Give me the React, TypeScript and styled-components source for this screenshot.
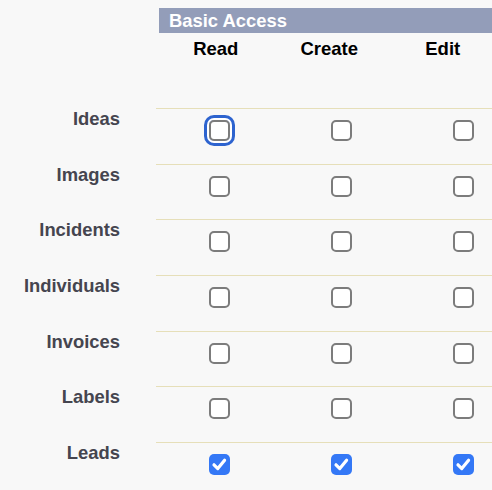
import React from 'react';
import styled, {createGlobalStyle} from 'styled-components';

const GlobalStyle = createGlobalStyle`
  html, body {
    margin: 0;
    padding: 0;
    background: #f8f8f8;
    overflow: hidden;
  }
  body {
    font-family: "Liberation Sans", Arial, Helvetica, sans-serif;
  }
`

const columns = ['Read', 'Create', 'Edit'];

const rows: { name: string; checked: boolean; focused?: boolean }[] = [
    {name: 'Ideas', checked: false, focused: true},
    {name: 'Images', checked: false},
    {name: 'Incidents', checked: false},
    {name: 'Individuals', checked: false},
    {name: 'Invoices', checked: false},
    {name: 'Labels', checked: false},
    {name: 'Leads', checked: true},
];

function CheckBox({checked, focused}: { checked: boolean; focused?: boolean }) {
    return (
        <BoxWrap $focused={focused}>
            <StyledCheck type="checkbox" defaultChecked={checked}/>
            {checked && (
                <CheckMark viewBox="0 0 21 21">
                    <path d="M5 10.8 L8.8 14.6 L15.6 6.2" fill="none" stroke="#fff" strokeWidth="3.2"
                          strokeLinecap="round" strokeLinejoin="round"/>
                </CheckMark>
            )}
        </BoxWrap>
    );
}

function App() {
    return (
        <Page>
            <GlobalStyle/>
            <Top>
                <SectionBar>Basic Access</SectionBar>
                <HeadRow>
                    {columns.map(c => <HeadCell key={c}>{c}</HeadCell>)}
                </HeadRow>
            </Top>
            <Table>
                {rows.map((r, i) => (
                    <Row key={r.name}>
                        <Label>{r.name}</Label>
                        <Cells>
                            {columns.map(c => (
                                <Cell key={c}>
                                    <CheckBox checked={r.checked} focused={r.focused && i === 0 && c === 'Read'}/>
                                </Cell>
                            ))}
                        </Cells>
                    </Row>
                ))}
            </Table>
        </Page>
    );
}

export default App;

const Page = styled.div`
  width: 492px;
  height: 490px;
  padding-top: 8px;
  box-sizing: border-box;
  overflow: hidden;
`

const Top = styled.div`
  padding-left: 159px;
`

const SectionBar = styled.div`
  height: 25px;
  line-height: 25px;
  background: #939db9;
  color: #fff;
  font-size: 18.4px;
  font-weight: 700;
  padding-left: 10px;
  white-space: nowrap;
`

const HeadRow = styled.div`
  display: grid;
  grid-template-columns: repeat(3, 113.5px);
  padding-top: 5px;
  height: 75px;
  box-sizing: border-box;
`

const HeadCell = styled.div`
  text-align: center;
  font-size: 18.5px;
  font-weight: 700;
  line-height: 22px;
  color: #000;
`

const Table = styled.div`
  display: flex;
  flex-direction: column;
`

const Row = styled.div`
  display: grid;
  grid-template-columns: 156px 1fr;
  height: 55.67px;
`

const Label = styled.div`
  text-align: right;
  padding: 1px 36px 0 0;
  font-size: 18.4px;
  font-weight: 700;
  line-height: 20px;
  color: #45454f;
  white-space: nowrap;
`

const Cells = styled.div`
  display: grid;
  grid-template-columns: repeat(3, 122px);
  padding-left: 2px;
  border-top: 1px solid #e6dfb9;
`

const Cell = styled.div`
  display: flex;
  justify-content: center;
  padding-top: 11px;
`

const BoxWrap = styled.span<{ $focused?: boolean }>`
  position: relative;
  display: inline-block;
  width: 21px;
  height: 21px;
  border-radius: 5px;
  box-shadow: ${p => p.$focused ? '0 0 0 2px #fff, 0 0 0 5px #2d63cf' : 'none'};
`

const StyledCheck = styled.input`
  appearance: none;
  -webkit-appearance: none;
  margin: 0;
  width: 21px;
  height: 21px;
  box-sizing: border-box;
  border: 2px solid #7c7c7c;
  border-radius: 5px;
  background: #fff;
  display: block;

  &:checked {
    border: none;
    background: #3478f6;
  }
`

const CheckMark = styled.svg`
  position: absolute;
  left: 0;
  top: 0;
  width: 21px;
  height: 21px;
  pointer-events: none;
`
